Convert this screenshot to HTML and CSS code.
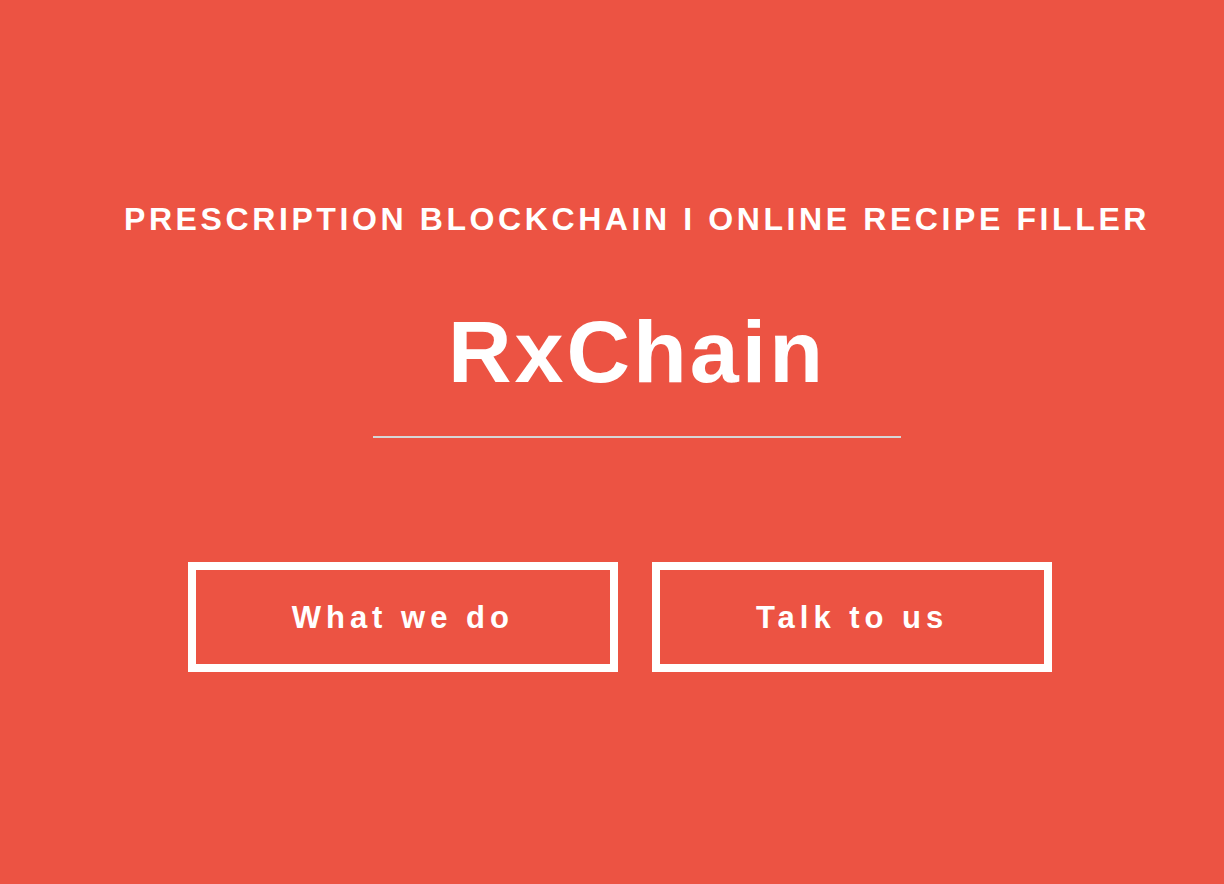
FILE: index.html
```html
<!DOCTYPE html>
<html lang="en">
<head>
<meta charset="utf-8">
<title>RxChain</title>
<link rel="stylesheet" href="styles.css">
</head>
<body>
<section class="hero">
  <div class="intro">
    <p class="tagline">PRESCRIPTION BLOCKCHAIN I ONLINE RECIPE FILLER</p>
    <h1 class="title">RxChain</h1>
    <hr class="rule">
  </div>
  <div class="actions">
    <a class="btn" href="#">What we do</a>
    <a class="btn" href="#">Talk to us</a>
  </div>
</section>
</body>
</html>
```
FILE: styles.css
```css
html, body {
  margin: 0;
  padding: 0;
  background: #ec5343;
}
body {
  font-family: "Liberation Sans", Arial, Helvetica, sans-serif;
  color: #ffffff;
  height: 884px;
  overflow: hidden;
}
.hero {
  padding-top: 199px;
  display: flex;
  flex-direction: column;
  align-items: center;
}
.intro {
  display: flex;
  flex-direction: column;
  align-items: center;
  padding-left: 50px;
}
.tagline {
  margin: 0;
  font-size: 32px;
  line-height: 40px;
  font-weight: bold;
  letter-spacing: 3.6px;
  white-space: nowrap;
}
.title {
  margin: 63px 0 0;
  font-size: 88px;
  line-height: 100px;
  font-weight: bold;
  letter-spacing: 3px;
}
.rule {
  margin: 34px 0 0;
  width: 528px;
  height: 2px;
  border: 0;
  background: #d6d6d6;
}
.actions {
  margin-top: 124px;
  padding-left: 16px;
  display: flex;
  gap: 34px;
}
.btn {
  display: block;
  border: 8px solid #ffffff;
  padding: 30px 96px 28px;
  font-size: 31px;
  line-height: 36px;
  font-weight: bold;
  letter-spacing: 5px;
  color: #ffffff;
  text-decoration: none;
  white-space: nowrap;
}
```
